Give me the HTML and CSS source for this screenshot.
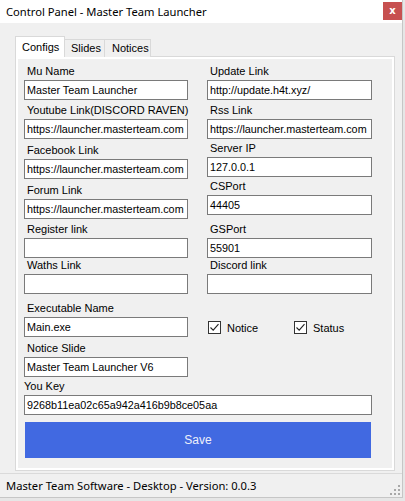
FILE: index.html
```html
<!DOCTYPE html>
<html>
<head>
<meta charset="utf-8">
<link rel="stylesheet" href="styles.css">
</head>
<body>
<div class="window">
  <div class="titlebar">
    <span class="title">Control Panel - Master Team Launcher</span>
    <div class="close">x</div>
  </div>
  <div class="content">
    <div class="tabs">
      <div class="tab active">Configs</div>
      <div class="tab">Slides</div>
      <div class="tab">Notices</div>
    </div>
    <div class="panel">
      <div class="cols">
        <div class="col left">
          <div class="group"><div class="label">Mu Name</div><div class="field">Master Team Launcher</div></div>
          <div class="group m4"><div class="label">Youtube Link(DISCORD RAVEN)</div><div class="field">https://launcher.masterteam.com</div></div>
          <div class="group m5"><div class="label">Facebook Link</div><div class="field">https://launcher.masterteam.com</div></div>
          <div class="group m5"><div class="label">Forum Link</div><div class="field">https://launcher.masterteam.com</div></div>
          <div class="group m4"><div class="label">Register link</div><div class="field"></div></div>
          <div class="group m1"><div class="label">Waths Link</div><div class="field"></div></div>
          <div class="group m8"><div class="label">Executable Name</div><div class="field">Main.exe</div></div>
          <div class="group m5"><div class="label">Notice Slide</div><div class="field">Master Team Launcher V6</div></div>
        </div>
        <div class="col right">
          <div class="group"><div class="label">Update Link</div><div class="field">http://update.h4t.xyz/</div></div>
          <div class="group m4"><div class="label">Rss Link</div><div class="field">https://launcher.masterteam.com</div></div>
          <div class="group m3"><div class="label">Server IP</div><div class="field">127.0.0.1</div></div>
          <div class="group m3"><div class="label">CSPort</div><div class="field">44405</div></div>
          <div class="group m8"><div class="label">GSPort</div><div class="field">55901</div></div>
          <div class="group m1"><div class="label">Discord link</div><div class="field"></div></div>
          <div class="checks">
            <label class="check first"><span class="box"><svg width="11" height="11" viewBox="0 0 11 11"><path d="M1.5 5.5 L4.2 8.2 L9.5 2.2" fill="none" stroke="#222" stroke-width="1.1"/></svg></span>Notice</label>
            <label class="check"><span class="box"><svg width="11" height="11" viewBox="0 0 11 11"><path d="M1.5 5.5 L4.2 8.2 L9.5 2.2" fill="none" stroke="#222" stroke-width="1.1"/></svg></span>Status</label>
          </div>
        </div>
      </div>
      <div class="keygroup">
        <div class="label key">You Key</div>
        <div class="field wide">9268b11ea02c65a942a416b9b8ce05aa</div>
      </div>
      <div class="save">Save</div>
    </div>
  </div>
  <div class="statusbar">
    <span class="status">Master Team Software - Desktop - Version: 0.0.3</span>
    <svg class="grip" width="12" height="12" viewBox="0 0 12 12">
      <rect x="9" y="1" width="2" height="2" fill="#a8a8a8"/>
      <rect x="5" y="5" width="2" height="2" fill="#a8a8a8"/>
      <rect x="9" y="5" width="2" height="2" fill="#a8a8a8"/>
      <rect x="1" y="9" width="2" height="2" fill="#a8a8a8"/>
      <rect x="5" y="9" width="2" height="2" fill="#a8a8a8"/>
      <rect x="9" y="9" width="2" height="2" fill="#a8a8a8"/>
    </svg>
  </div>
</div>
</body>
</html>
```
FILE: styles.css
```css
html, body {
  margin: 0;
  padding: 0;
}
body {
  background: #e6e6e6;
  width: 405px;
  height: 501px;
  overflow: hidden;
}
.window {
  width: 402px;
  height: 497px;
  background: #f0f0f0;
  border-right: 1px solid #c6c6c6;
  border-bottom: 1px solid #c6c6c6;
  box-sizing: content-box;
  display: flex;
  flex-direction: column;
  font-family: "Liberation Sans", Arial, sans-serif;
  font-size: 11px;
  color: #000;
}
.titlebar {
  height: 23px;
  background: #fff;
  display: flex;
  align-items: center;
  flex-shrink: 0;
}
.title {
  font-family: "Noto Sans", "Open Sans", sans-serif;
  font-size: 11.2px;
  padding-left: 6px;
  color: #000;
}
.close {
  margin-left: auto;
  align-self: flex-start;
  margin-top: 2px;
  width: 19px;
  height: 18px;
  background: #c75050;
  color: #fff;
  font-family: "DejaVu Sans", sans-serif;
  font-weight: bold;
  font-size: 10px;
  line-height: 17px;
  text-align: center;
}
.content {
  flex: 1;
  padding: 13px 7px 0 15px;
  display: flex;
  flex-direction: column;
}
.tabs {
  display: flex;
  align-items: flex-end;
  height: 21px;
  position: relative;
  z-index: 1;
}
.tab {
  height: 18px;
  box-sizing: border-box;
  border: 1px solid #d9d9d9;
  border-bottom: none;
  background: #f0f0f0;
  line-height: 17px;
  padding: 0 6px;
  margin-left: -1px;
}
.tab.active {
  height: 21px;
  background: #fff;
  margin-left: 0;
  line-height: 20px;
  padding: 0 7px 0 6px;
  width: 50px;
}
.tab:nth-child(2) { width: 41px; padding: 0 0 0 6px; box-sizing: border-box; }
.tab:nth-child(3) { width: 47px; padding: 0 0 0 7px; box-sizing: border-box; }
.panel {
  margin-top: -1px;
  width: 380px;
  height: 415px;
  box-sizing: border-box;
  border: 1px solid #d9d9d9;
  box-shadow: inset 0 0 0 2px #fff;
  padding: 8px 0 0 8px;
}
.cols {
  display: flex;
  gap: 19px;
}
.col {
  display: flex;
  flex-direction: column;
}
.col.left { width: 164px; }
.col.right { width: 165px; }
.group {
  display: flex;
  flex-direction: column;
}
.m1 { margin-top: 1px; }
.m3 { margin-top: 3px; }
.m4 { margin-top: 4px; }
.m5 { margin-top: 5px; }
.m8 { margin-top: 8px; }
.label {
  line-height: 13px;
  height: 13px;
  margin-bottom: 2px;
  padding-left: 3px;
  white-space: nowrap;
}
.label.key { padding-left: 0; }
.field {
  height: 20px;
  box-sizing: border-box;
  border: 1px solid #7a7a7a;
  background: #fff;
  line-height: 18px;
  font-size: 10.8px;
  padding-left: 2px;
  white-space: nowrap;
  overflow: hidden;
}
.checks {
  display: flex;
  margin-top: 27px;
  padding-left: 1px;
}
.check {
  display: flex;
  align-items: center;
  height: 13px;
  font-size: 11px;
}
.check.first { width: 86px; }
.box {
  width: 13px;
  height: 13px;
  box-sizing: border-box;
  border: 1px solid #333;
  background: #fff;
  display: flex;
  align-items: center;
  justify-content: center;
  margin-right: 6px;
}
.keygroup {
  margin-top: 3px;
  display: flex;
  flex-direction: column;
}
.field.wide { width: 348px; }
.save {
  margin-top: 7px;
  margin-left: 1px;
  width: 346px;
  height: 36px;
  background: #4169e1;
  color: #eef0fa;
  font-size: 12px;
  line-height: 36px;
  text-align: center;
}
.statusbar {
  margin-top: 2px;
  height: 23px;
  border-top: 1px solid #dadada;
  display: flex;
  align-items: center;
  justify-content: space-between;
  flex-shrink: 0;
}
.status {
  font-family: "Noto Sans", "Open Sans", sans-serif;
  font-size: 11.2px;
  padding-left: 6px;
}
.grip {
  align-self: flex-end;
  margin-bottom: 1px;
  margin-right: 1px;
}
```
